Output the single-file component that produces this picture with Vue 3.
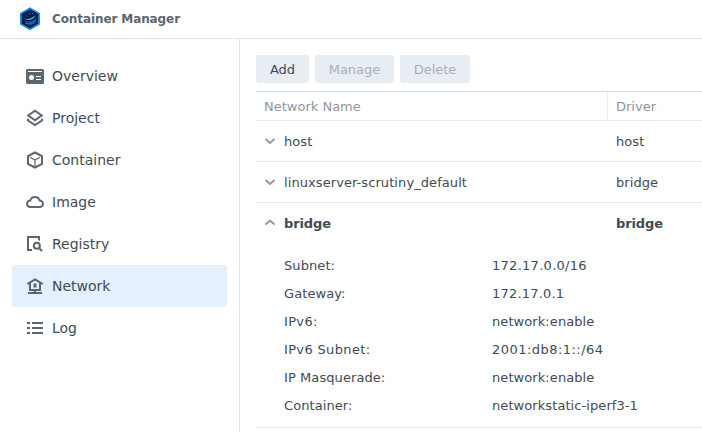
<script setup>
import { ref } from 'vue'

const active = ref('Network')
const menu = ['Overview', 'Project', 'Container', 'Image', 'Registry', 'Network', 'Log']
const networks = [
  { name: 'host', driver: 'host', open: false },
  { name: 'linuxserver-scrutiny_default', driver: 'bridge', open: false },
  { name: 'bridge', driver: 'bridge', open: true },
]
const details = [
  { label: 'Subnet:', value: '172.17.0.0/16', kind: 'numeric' },
  { label: 'Gateway:', value: '172.17.0.1', kind: 'address' },
  { label: 'IPv6:', value: 'network:enable' },
  { label: 'IPv6 Subnet:', value: '2001:db8:1::/64', kind: 'subnet' },
  { label: 'IP Masquerade:', value: 'network:enable' },
  { label: 'Container:', value: 'networkstatic-iperf3-1' },
]
</script>

<template>
  <div class="window">
    <header class="titlebar">
      <svg class="logo" width="22" height="24" viewBox="0 0 22 24">
        <path d="M11 1.300 20.100 6.500V17L11 22.200 1.900 17V6.500Z" fill="#06184a" stroke="#0793e8" stroke-width="1.700" stroke-linejoin="round" />
        <path d="M5.500 13.500C9 15 13.500 14.200 17 11V15.300L11 18.800 6.500 16.800Z" fill="#164a8e" />
        <path d="M5 11.600C9 12.600 13.500 10.800 16.300 8.200 15.700 12.400 9 14.700 5 11.600Z" fill="#23bdd4" />
        <path d="M6.500 16.300C9.500 17.200 13 16.700 16 14.800" fill="none" stroke="#2875bd" stroke-width="1" />
        <path d="M10 7h1.500M13 6.500h1M7 9h1.300" stroke="#2296d2" stroke-width="1" />
      </svg>
      <h1>Container Manager</h1>
    </header>
    <div class="body">
      <nav class="sidebar">
        <a v-for="item in menu" :key="item" class="item" :class="{ active: item === active }" @click="active = item">
          <svg class="icon" width="18" height="18" viewBox="0 0 18 18">
            <template v-if="item === 'Overview'">
              <path fill-rule="evenodd" fill="#5c6670" d="M1.500 2h15A1.500 1.500 0 0 1 18 3.500v12a1.500 1.500 0 0 1-1.500 1.500h-15A1.500 1.500 0 0 1 0 15.500v-12A1.500 1.500 0 0 1 1.500 2ZM2 4v1h14V4ZM5.500 8a2.500 2.500 0 1 0 0 5 2.500 2.500 0 0 0 0-5ZM10 9v1h5V9ZM10 12v1h5v-1Z" />
            </template>
            <g v-else-if="item === 'Project'" class="line">
              <path d="M9 1.800 15.700 6.500 9 11.200 2.300 6.500Z" />
              <path d="M2 9.700V11.500L9 16 16 11.500V9.700" />
            </g>
            <g v-else-if="item === 'Container'" class="line">
              <path d="M9 1.500 16 5.200V12.800L9 16.500 2 12.800V5.200Z" />
              <path class="thin" d="M4 6.300 9 9 14 6.300M9 9v6" />
            </g>
            <g v-else-if="item === 'Image'" class="line">
              <path d="M4.300 14A3.250 3.250 0 0 1 4.300 7.500 4.900 4.900 0 0 1 13.700 7.500 3.250 3.250 0 0 1 13.700 14Z" />
            </g>
            <g v-else-if="item === 'Registry'" class="line">
              <path d="M6 15H2V2H13V5.500" />
              <circle cx="10.800" cy="10.800" r="3" />
              <path d="M13 13 16 16" />
            </g>
            <g v-else-if="item === 'Network'" class="line">
              <path d="M1.300 7 9 2.300 16.700 7M4 6V13H14V6M9 13v3M2 16H16" />
              <path fill="#5c6670" stroke="none" d="M7.500 6.500h3v4h-3z" />
            </g>
            <path v-else fill="#5c6670" d="M1 3h3v2H1zM6 3h11v2H6zM1 8h3v2H1zM6 8h11v2H6zM1 13h3v2H1zM6 13h11v2H6z" />
          </svg>
          <span>{{ item }}</span>
        </a>
      </nav>
      <main class="content">
        <div class="toolbar">
          <button class="add">Add</button>
          <button class="manage" disabled>Manage</button>
          <button class="delete" disabled>Delete</button>
        </div>
        <div class="table">
          <div class="row head"><div class="name">Network Name</div><div class="driver">Driver</div></div>
          <section v-for="(network, i) in networks" :key="i" class="entry">
            <div class="row" :class="{ open: network.open }">
              <div class="name">
                <svg class="chevron" width="12" height="8" viewBox="0 0 12 8">
                  <path :d="network.open ? 'M1.500 5.500 6 1.500 10.500 5.500' : 'M1.500 2 6 6 10.500 2'" />
                </svg>
                <span>{{ network.name }}</span>
              </div>
              <div class="driver"><span>{{ network.driver }}</span></div>
            </div>
            <dl v-if="network.open" class="details">
              <template v-for="detail in details" :key="detail.label">
                <dt :class="{ wide: detail.label.startsWith('IPv6') }">{{ detail.label }}</dt>
                <dd :class="detail.kind">{{ detail.value }}</dd>
              </template>
            </dl>
          </section>
        </div>
      </main>
    </div>
  </div>
</template>

<style>
body { margin: 0; overflow: hidden; background: #fff; }
</style>

<style scoped>
.window { width: 702px; height: 432px; display: flex; flex-direction: column; overflow: hidden; color: #414b55; font: 13px/20px Verdana, "DejaVu Sans", sans-serif; }
.titlebar { height: 38px; flex: none; display: flex; align-items: center; gap: 11px; padding-left: 19px; border-bottom: 1px solid #dfe5ec; }
h1 { margin: 0; font-size: 12px; line-height: 20px; letter-spacing: -0.1px; color: #5c6670; }
.body { flex: 1; min-height: 0; display: flex; }
.sidebar { box-sizing: border-box; width: 240px; flex: none; padding: 16px 12px; border-right: 1px solid #dfe5ec; }
.item { height: 42px; display: flex; align-items: center; gap: 8px; padding-left: 14px; border-radius: 4px; font-size: 14px; }
.item.active { background: #e4f0fd; }
.line { fill: none; stroke: #5c6670; stroke-width: 2; }
.line .thin { stroke-width: 1.200; }
.content { flex: 1; min-width: 0; padding: 16px 0 0 16px; }
.toolbar { display: flex; gap: 6px; height: 28px; margin-bottom: 8px; }
button { padding: 1px 0 0; border: 0; border-radius: 3px; background: #e8edf4; color: #414b55; font: inherit; }
button:disabled { color: #a7b0ba; }
.add { width: 53px; }
.manage { width: 79px; }
.delete { width: 70px; }
.table { border-top: 1px solid #d4dde7; }
.row { display: flex; height: 40px; }
.name { box-sizing: border-box; width: 352px; display: flex; align-items: center; padding-left: 8px; }
.driver { display: flex; align-items: center; padding-left: 8px; }
.head { height: 28px; border-bottom: 1px solid #e6ecf4; color: #8f969d; }
.head .name, .head .driver { padding-top: 2px; box-sizing: border-box; }
.head .name { border-right: 1px solid #e6ecf4; }
.entry { border-bottom: 1px solid #e6ecf4; }
.entry .name span, .entry .driver span { padding-top: 2px; letter-spacing: 0.08px; }
.chevron { margin-right: 8px; fill: none; stroke: #92999f; stroke-width: 2; }
.open { font-weight: bold; }
.entry .open .name span, .entry .open .driver span { letter-spacing: -0.1px; }
.details { display: grid; grid-template-columns: 208px 1fr; grid-auto-rows: 28px; align-items: center; margin: 0; padding: 9px 0 7px 28px; letter-spacing: 0.08px; }
dd { margin: 0; }
.wide { letter-spacing: 0.35px; }
.numeric { letter-spacing: 0.28px; }
.address { letter-spacing: 0.2px; }
.subnet { letter-spacing: 0.46px; }
</style>
